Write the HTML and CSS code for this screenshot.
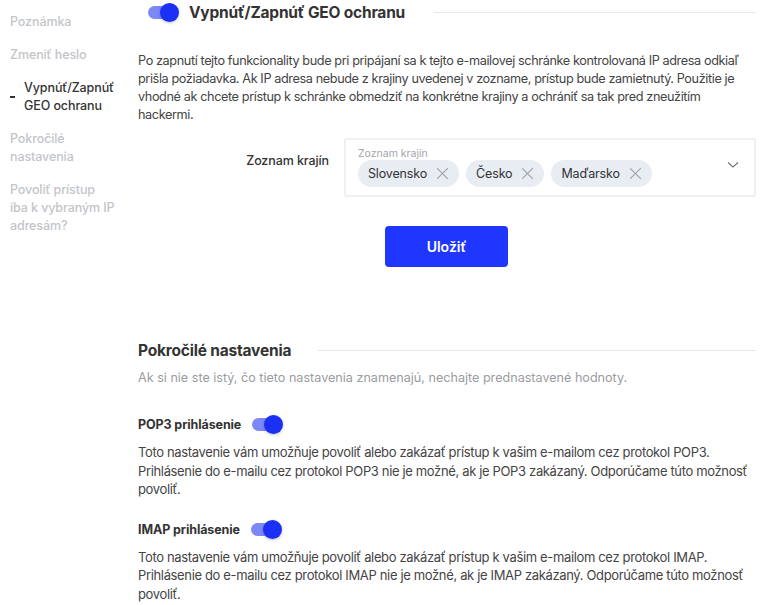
FILE: index.html
```html
<!DOCTYPE html>
<html>
	<head>
		<meta charset="UTF-8">
		<title>GEO ochrana</title>
	<link rel="stylesheet" href="styles.css">
	</head>
	<body>
		<div class="page">
			<ul class="side">
				<li>Poznámka</li>
				<li>Zmeniť heslo</li>
				<li class="active">Vypnúť/Zapnúť GEO ochranu</li>
				<li>Pokročilé nastavenia</li>
				<li>Povoliť prístup iba k vybraným IP adresám?</li>
			</ul>
			<div class="main">
				<div class="head head-geo">
					<span class="switch"><span class="knob"></span></span>
					<h2>Vypnúť/Zapnúť GEO ochranu</h2>
					<span class="rule"></span>
				</div>
				<p class="text geo-text">Po zapnutí tejto funkcionality bude pri pripájaní sa k tejto e-mailovej schránke kontrolovaná IP adresa odkiaľ prišla požiadavka. Ak IP adresa nebude z krajiny uvedenej v zozname, prístup bude zamietnutý. Použitie je vhodné ak chcete prístup k schránke obmedziť na konkrétne krajiny a ochrániť sa tak pred zneužitím hackermi.</p>
				<div class="field">
					<label class="field-label">Zoznam krajín</label>
					<div class="select">
						<div class="select-inner">
							<span class="select-label">Zoznam krajín</span>
							<div class="chips">
								<span class="chip">Slovensko <i class="x"></i></span>
								<span class="chip">Česko <i class="x"></i></span>
								<span class="chip">Maďarsko <i class="x"></i></span>
							</div>
						</div>
						<svg class="chev" width="12" height="8" viewBox="0 0 12 8"><path d="M1 1.5 L6 6 L11 1.5" fill="none" stroke="#777" stroke-width="1.2"/></svg>
					</div>
				</div>
				<div class="actions">
					<button class="save">Uložiť</button>
				</div>

				<div class="head head-adv">
					<h2>Pokročilé nastavenia</h2>
					<span class="rule"></span>
				</div>
				<p class="hint">Ak si nie ste istý, čo tieto nastavenia znamenajú, nechajte prednastavené hodnoty.</p>

				<div class="opt">
					<div class="opt-title"><h3>POP3 prihlásenie</h3><span class="switch"><span class="knob"></span></span></div>
					<p class="text">Toto nastavenie vám umožňuje povoliť alebo zakázať prístup k vašim e-mailom cez protokol POP3. Prihlásenie do e-mailu cez protokol POP3 nie je možné, ak je POP3 zakázaný. Odporúčame túto možnosť povoliť.</p>
				</div>
				<div class="opt">
					<div class="opt-title"><h3>IMAP prihlásenie</h3><span class="switch"><span class="knob"></span></span></div>
					<p class="text">Toto nastavenie vám umožňuje povoliť alebo zakázať prístup k vašim e-mailom cez protokol IMAP. Prihlásenie do e-mailu cez protokol IMAP nie je možné, ak je IMAP zakázaný. Odporúčame túto možnosť povoliť.</p>
				</div>
			</div>
		</div>
	</body>
</html>
```
FILE: styles.css
```css
*{
	margin: 0;
	padding: 0;
	box-sizing: border-box;
}
body{
	font-family: Inter, "Noto Sans", sans-serif;
	color: #3a3a3a;
	background: #fff;
	overflow: hidden;
}
.page{
	display: flex;
	padding: 0 27px 0 10px;
}
.side{
	width: 128px;
	flex: none;
	list-style: none;
	padding-top: 13px;
	padding-right: 23.5px;
}
.side li{
	font-size: 12.5px;
	letter-spacing: -0.1px;
	line-height: 18px;
	color: #c3c5c9;
	margin-bottom: 15px;
	font-weight: 500;
}
.side li.active{
	color: #333;
	position: relative;
	padding-left: 14px;
	margin-right: -6px;
}
.side li.active:before{
	content: "";
	position: absolute;
	left: 0;
	top: 17px;
	width: 5px;
	height: 2px;
	background: #333;
}
.main{
	flex: 1;
	min-width: 0;
}
.head{
	display: flex;
	align-items: center;
}
.head h2{
	font-size: 15.5px;
	letter-spacing: -0.2px;
	font-weight: 700;
	color: #333;
	white-space: nowrap;
}
.rule{
	flex: 1;
	height: 1px;
	background: #e6e7ea;
	margin-left: 29px;
}
.head-geo{
	height: 24px;
}
.head-geo .switch{
	margin: 0 10px 0 10px;
}
.switch{
	position: relative;
	display: inline-block;
	width: 31px;
	height: 19px;
	flex: none;
}
.switch:before{
	content: "";
	position: absolute;
	left: 0;
	top: 3px;
	width: 24px;
	height: 13px;
	border-radius: 7px;
	background: #7c88f7;
}
.knob{
	position: absolute;
	right: 0;
	top: 0;
	width: 19px;
	height: 19px;
	border-radius: 50%;
	background: #1b2ff5;
	box-shadow: 0 1px 3px rgba(0,0,0,.25);
}
.text{
	font-size: 13px;
	letter-spacing: -0.35px;
	line-height: 18.5px;
	color: #444;
}
.geo-text{
	margin-top: 28px;
	font-size: 12.7px;
	letter-spacing: -0.4px;
	line-height: 18px;
}
.field{
	display: flex;
	align-items: flex-start;
	margin-top: 14px;
}
.field-label{
	width: 206px;
	flex: none;
	text-align: right;
	padding-right: 15px;
	padding-top: 15px;
	font-size: 12.5px;
	letter-spacing: -0.1px;
	font-weight: 500;
	color: #333;
}
.select{
	flex: 1;
	border: 2px solid #eef0f2;
	border-radius: 2px;
	display: flex;
	align-items: center;
	padding: 7px 15px 8px 12px;
}
.select-inner{
	flex: 1;
}
.select-label{
	display: block;
	font-size: 10.5px;
	line-height: 13px;
	color: #a3a6ab;
}
.chips{
	display: flex;
	gap: 7px;
}
.chip{
	display: inline-flex;
	align-items: center;
	height: 27px;
	border-radius: 14px;
	background: #e8edf3;
	padding: 0 11px 0 10px;
	font-size: 12.5px;
	letter-spacing: -0.15px;
	color: #333;
}
.x{
	position: relative;
	display: inline-block;
	width: 11px;
	height: 11px;
	margin-left: 10px;
}
.x:before,
.x:after{
	content: "";
	position: absolute;
	left: 5px;
	top: -2px;
	width: 1.3px;
	height: 15px;
	background: #9a9ea4;
	transform: rotate(45deg);
}
.x:after{
	transform: rotate(-45deg);
}
.chev{
	flex: none;
	margin-top: -4px;
}
.actions{
	padding-left: 247px;
	margin-top: 29px;
}
.save{
	width: 123px;
	height: 41px;
	border: none;
	border-radius: 4px;
	background: #1f36ff;
	color: #fff;
	font-family: Inter, sans-serif;
	font-size: 14px;
	font-weight: 600;
}
.head-adv{
	margin-top: 74px;
}
.head-adv .rule{
	margin-left: 27px;
}
.hint{
	margin-top: 10px;
	font-size: 12.6px;
	color: #9a9ca0;
}
.opt{
	margin-top: 30px;
}
.opt + .opt{
	margin-top: 21px;
}
.opt-title{
	display: flex;
	align-items: center;
	margin-bottom: 9px;
}
.opt-title h3{
	font-size: 12.5px;
	letter-spacing: -0.1px;
	font-weight: 700;
	color: #333;
	margin-right: 11px;
}
```
